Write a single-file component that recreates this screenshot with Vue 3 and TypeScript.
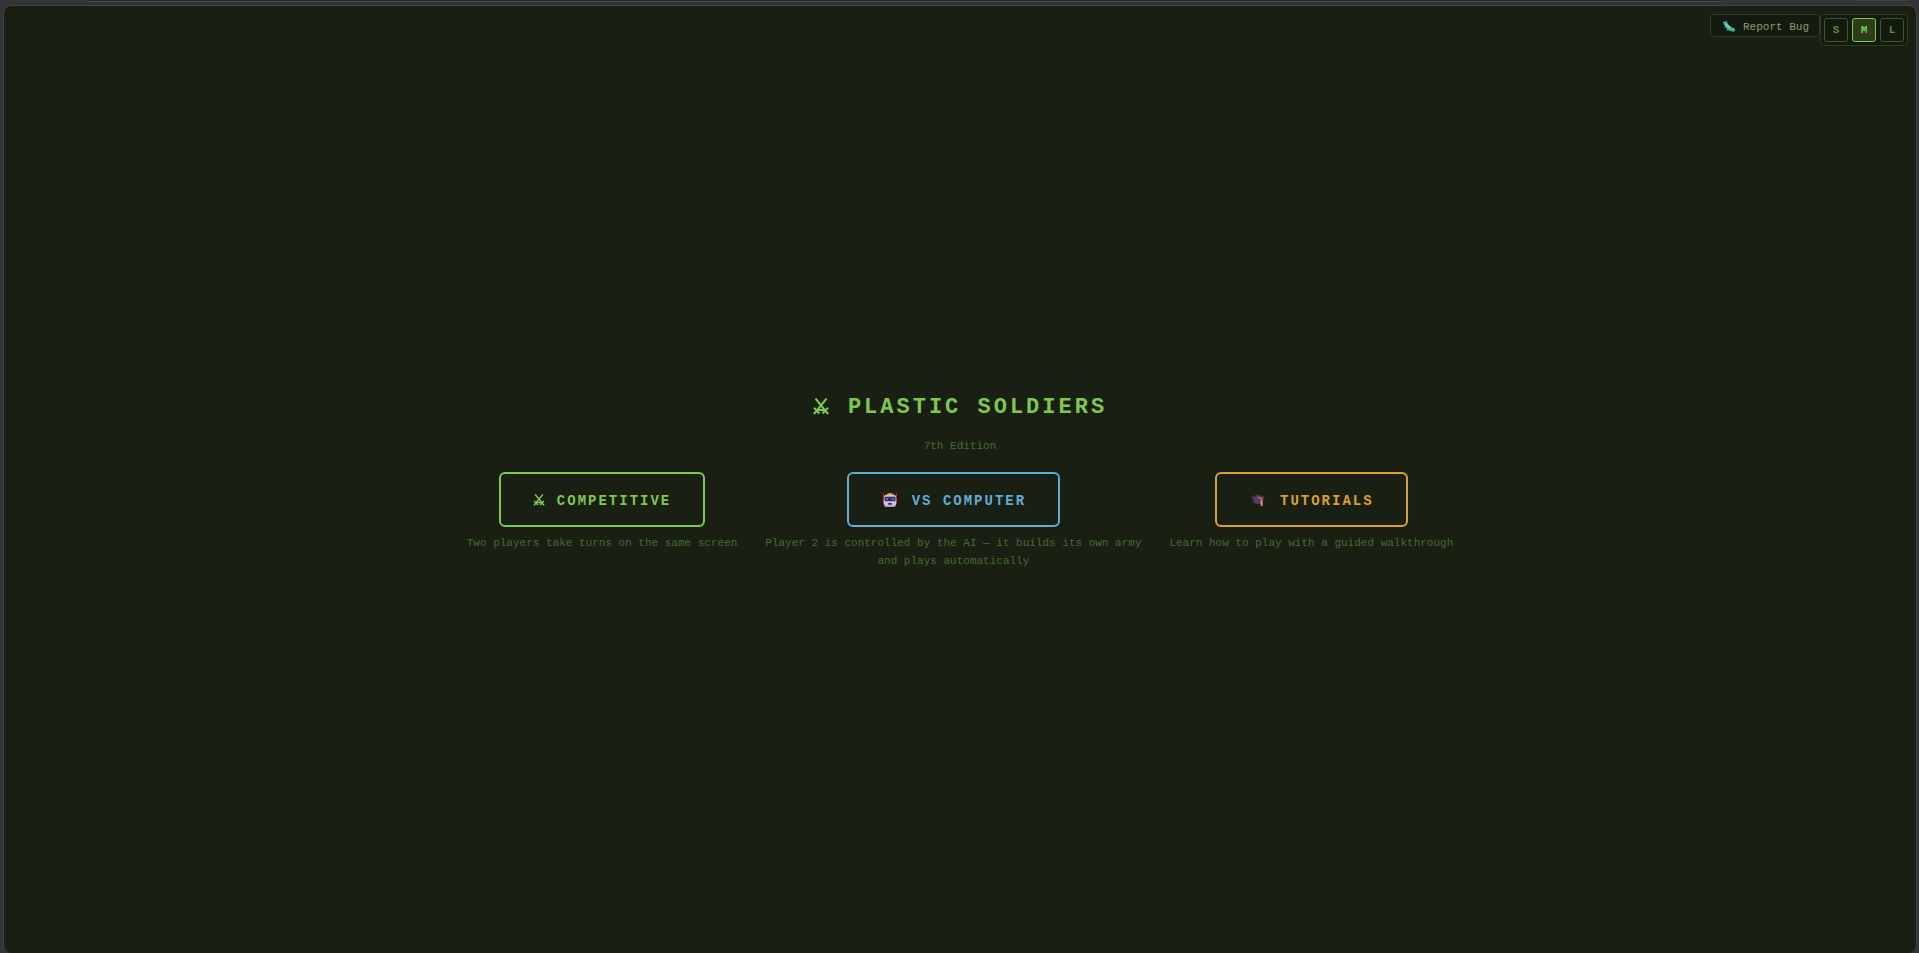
<script setup lang="ts">
import { ref } from 'vue'

type Icon = 'swords' | 'robot' | 'cap'
interface Mode {
  id: string
  icon: Icon
  label: string
  text: string
}

const modes: Mode[] = [
  { id: 'competitive', icon: 'swords', label: 'COMPETITIVE', text: 'Two players take turns on the same screen' },
  {
    id: 'computer',
    icon: 'robot',
    label: 'VS COMPUTER',
    text: 'Player 2 is controlled by the AI — it builds its own army and plays automatically',
  },
  { id: 'tutorials', icon: 'cap', label: 'TUTORIALS', text: 'Learn how to play with a guided walkthrough' },
]

const sizes = ['S', 'M', 'L']
const size = ref('M')
</script>

<template>
  <div class="window">
    <div class="tabstrip" aria-hidden="true">
      <span class="address"></span>
      <span class="menu"></span>
    </div>
    <div class="page">
      <div class="toolbar">
        <button type="button" class="report">
          <svg class="bug" viewBox="0 0 12 11" aria-hidden="true">
            <path d="M2.500 2.500 4.500 5.500 7 7.800 10 8.800" fill="none" stroke="#3fb8a0" stroke-width="3.800" stroke-linecap="round" stroke-linejoin="round" />
            <path d="M2.200 2.200 4.800 5 7.200 6.600" fill="none" stroke="#66d6b4" stroke-width="1.800" stroke-linecap="round" />
            <path d="M1 1.800 0.400 0.600M3.400 1 4.200 0.200M2.500 5.500 1.800 6.500M5 8 4.200 9.200" stroke="#4fc9ae" stroke-width="0.900" stroke-linecap="round" />
            <circle cx="1.900" cy="2.700" r="0.500" fill="#2d5268" />
          </svg>
          <span>Report Bug</span>
        </button>
        <div class="sizes" role="group" aria-label="Interface size">
          <button
            v-for="s in sizes"
            :key="s"
            type="button"
            class="size"
            :class="{ active: s === size }"
            :aria-pressed="s === size"
            @click="size = s"
          >{{ s }}</button>
        </div>
      </div>

      <main class="home">
        <h1 class="title">
          <svg class="swords" viewBox="0 0 16 17" aria-hidden="true">
            <path d="M2.500 0.500 12.500 12.800M13.500 0.500 3.500 12.800" />
            <path d="M1 9.800 6.500 15.500M15 9.800 9.500 15.500M4 12.500 0.800 16M12 12.500 15.200 16M2.500 12H13.500" />
          </svg>
          <span>PLASTIC SOLDIERS</span>
        </h1>
        <p class="edition">7th Edition</p>
        <div class="modes">
          <section v-for="m in modes" :key="m.id" class="mode">
            <button type="button" class="start" :class="m.id" :aria-describedby="m.id + '-text'">
              <svg v-if="m.icon === 'swords'" class="swords" viewBox="0 0 16 17" aria-hidden="true">
                <path d="M2.500 0.500 12.500 12.800M13.500 0.500 3.500 12.800" />
                <path d="M1 9.800 6.500 15.500M15 9.800 9.500 15.500M4 12.500 0.800 16M12 12.500 15.200 16M2.500 12H13.500" />
              </svg>
              <svg v-else-if="m.icon === 'robot'" class="emoji" viewBox="0 0 14 14" aria-hidden="true">
                <path d="M0.500 0V9M13.500 0V9" stroke="#b51e52" />
                <rect x="0" y="5" width="2" height="6" rx="1" fill="#e0356c" />
                <rect x="12" y="5" width="2" height="6" rx="1" fill="#e0356c" />
                <rect x="1" y="1.500" width="12" height="12.500" rx="3" fill="#d3c0e0" />
                <path d="M1.500 11.500Q7 13.500 12.500 11.500L11.500 13.300Q10.500 14 9 14H5Q3 14 2.300 13.300Z" fill="#b99bd0" />
                <path d="M4 2Q4 0 7 0T10 2Z" fill="#f5a623" />
                <rect x="1.500" y="3.800" width="11" height="4.400" rx="1.200" fill="#3b2d58" />
                <rect x="3" y="5" width="2" height="2.200" rx="1" fill="#3d8fe0" />
                <rect x="9" y="5" width="2" height="2.200" rx="1" fill="#3d8fe0" />
                <rect x="5" y="10" width="4" height="1.800" rx="0.500" fill="#40305c" />
              </svg>
              <svg v-else class="emoji" viewBox="0 0 14 14" aria-hidden="true">
                <path d="M2 5 13 5 11.500 10.500Q7 12.500 2.500 9.500Z" fill="#50386f" />
                <path d="M0 4.500 6 1.500 13.500 3.500 10 7.500Z" fill="#44355b" />
                <path d="M0 4.500 10 7.500 13.500 3.500" fill="none" stroke="#66508a" stroke-width="0.600" />
                <path d="M6.500 4 10.500 5.500V9" fill="none" stroke="#d58a48" stroke-width="1.200" />
                <path d="M9.500 8H11.600L11.800 13H9.800Z" fill="#ef8950" />
              </svg>
              <span>{{ m.label }}</span>
            </button>
            <p :id="m.id + '-text'" class="text">{{ m.text }}</p>
          </section>
        </div>
      </main>
    </div>
  </div>
</template>

<style>
body {
  margin: 0;
  background: #343434;
}
</style>

<style scoped>
.window {
  box-sizing: border-box;
  display: flex;
  flex-direction: column;
  min-height: 100vh;
  padding: 0 2px 0 3px;
  background: #343434;
  font-family: "Courier New", "Liberation Mono", monospace;
}
.tabstrip {
  display: flex;
  justify-content: space-between;
  height: 5px;
  padding: 0 9px 0 83px;
}
.address {
  flex: 0 1 1637px;
  height: 1px;
  background: #292929;
  border-bottom: 1px solid #4b4b4b;
  border-radius: 0 0 6px 6px;
}
.menu {
  width: 52px;
  height: 1px;
  background: #414141;
}
.page {
  position: relative;
  display: flex;
  flex: 1;
  align-items: center;
  justify-content: center;
  border: 1px solid #424242;
  border-bottom: 0;
  border-radius: 8px;
  background: #1a1f14;
}
.toolbar {
  position: absolute;
  top: 8px;
  right: 8px;
  display: flex;
  align-items: flex-start;
}
button {
  font-family: inherit;
  cursor: pointer;
}
.report {
  display: flex;
  align-items: center;
  gap: 8px;
  height: 23px;
  padding: 2px 10px 0 12px;
  border: 1px solid #2d3d1e;
  border-radius: 4px;
  background: #151a10;
  color: #8a9a6a;
  font-size: 11px;
}
.bug {
  width: 12px;
  height: 11px;
}
.sizes {
  display: flex;
  gap: 4px;
  padding: 3px;
  border: 1px solid #2d3d1e;
  border-radius: 4px;
  background: #151a10;
}
.size {
  width: 24px;
  height: 24px;
  padding: 0;
  border: 1px solid #3a5a2a;
  border-radius: 3px;
  background: #141a0f;
  color: #5a8a3a;
  font-size: 11px;
  font-weight: bold;
}
.size.active {
  border-color: #7ec850;
  background: #2d3d1a;
  color: #7ec850;
}
.home {
  display: flex;
  flex-direction: column;
  align-items: center;
  padding-top: 2px;
}
.title {
  display: flex;
  align-items: center;
  gap: 19px;
  margin: 0;
  color: #7ec850;
  font-size: 22px;
  line-height: 34px;
  letter-spacing: 3px;
}
.swords {
  fill: none;
  stroke: currentColor;
  stroke-width: 2;
}
.title .swords {
  width: 16px;
  height: 17px;
  margin-bottom: 4px;
}
.edition {
  margin: 12px 0 17px;
  color: #446b35;
  font-size: 11px;
  line-height: 18px;
}
.modes {
  display: flex;
  justify-content: center;
  gap: 24px;
}
.mode {
  display: flex;
  flex-direction: column;
  align-items: center;
  gap: 7px;
  max-width: 384px;
}
.start {
  display: flex;
  align-items: center;
  gap: 12px;
  height: 55px;
  padding: 2px 32px 0;
  border: 2px solid currentColor;
  border-radius: 6px;
  background: transparent;
  font-size: 14px;
  font-weight: bold;
  letter-spacing: 2px;
}
.start .swords {
  width: 12px;
  height: 12px;
  margin-bottom: 2px;
}
.emoji {
  width: 14px;
  height: 14px;
  margin: 0 3px 2px 2px;
}
.competitive {
  color: #7ec850;
}
.computer {
  color: #62acd2;
}
.tutorials {
  color: #d8a030;
}
.text {
  margin: 0;
  color: #446b35;
  font-size: 11px;
  line-height: 18px;
  text-align: center;
}
</style>
